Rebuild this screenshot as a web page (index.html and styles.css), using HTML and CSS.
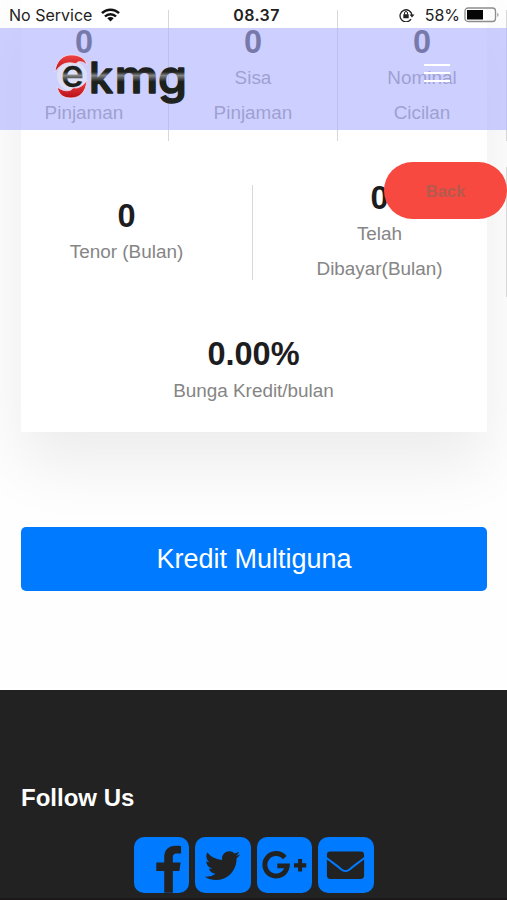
FILE: index.html
```html
<!DOCTYPE html>
<html lang="id">
<head>
<meta charset="utf-8">
<meta name="viewport" content="width=device-width, initial-scale=1">
<title>eKMG</title>
<link rel="stylesheet" href="styles.css">
</head>
<body>
<div class="screen">
  <main class="content">
    <section class="card">
      <div class="row row-top">
        <div class="stat"><strong>0</strong><span><br>Pinjaman</span></div>
        <div class="stat"><strong>0</strong><span>Sisa<br>Pinjaman</span></div>
        <div class="stat"><strong>0</strong><span>Nominal<br>Cicilan</span></div>
      </div>
      <div class="row row-mid">
        <div class="stat short"><strong>0</strong><span>Tenor (Bulan)</span></div>
        <div class="stat"><strong>0</strong><span>Telah<br>Dibayar(Bulan)</span></div>
      </div>
      <div class="row row-last">
        <div class="stat"><strong>0.00%</strong><span>Bunga Kredit/bulan</span></div>
      </div>
    </section>
    <a class="cta">Kredit Multiguna</a>
  </main>

  <footer class="footer">
    <h4>Follow Us</h4>
    <div class="social">
      <a class="tile"><svg viewBox="0 0 56 56"><path d="M30.500 56V34H22.500v-8.500h8V20c0-7.500 4.500-11.500 11.300-11.500 2.500 0 4.500.2 5.700.4v7.600h-4c-3.600 0-4.300 1.700-4.300 4.200v4.800H47L45.800 34h-6.600v22z"/></svg></a>
      <a class="tile"><svg viewBox="0 0 56 56"><g transform="translate(7.500 8.300) scale(.0226)"><path d="M1684 408q-67 98-162 167 1 14 1 42 0 130-38 259.500t-115.500 248.500-184.500 210.500-258 146-323 54.500q-271 0-496-145 35 4 78 4 225 0 401-138-105-2-188-64.500t-114-159.500q33 5 61 5 43 0 85-11-112-23-185.500-111.500t-73.500-205.500v-4q68 38 146 41-66-44-105-115t-39-154q0-88 44-163 121 149 294.500 238.500t371.500 99.500q-8-38-8-74 0-134 94.500-228.500t228.500-94.500q140 0 236 102 109-21 205-78-37 115-142 178 93-10 186-50z"/></g></svg></a>
      <a class="tile"><svg viewBox="0 0 56 56"><path class="line" d="M28 20.600a11.300 11.300 0 1 0 2.500 8.300H20.500"/><path d="M41.500 22h4v4.200h4.200v4.200h-4.200v4.200h-4v-4.200h-4.200v-4.200h4.200z"/></svg></a>
      <a class="tile"><svg viewBox="0 0 56 56"><rect x="9" y="14.500" width="37.500" height="27.500" rx="3.500"/><path class="flap" d="M8 20.500C15 26 19 28.500 23 32c3.500 3 6 3 9.500 0 4-3.500 8-6 15-11.500"/></svg></a>
    </div>
  </footer>

  <a class="back">Back</a>

  <nav class="navbar">
    <svg class="logo" viewBox="0 0 136 60" role="img" aria-label="ekmg">
      <defs>
        <linearGradient id="steel" gradientUnits="userSpaceOnUse" x1="0" y1="8" x2="0" y2="52">
          <stop offset="0" stop-color="#171717"/><stop offset=".34" stop-color="#20231f"/>
          <stop offset=".42" stop-color="#808283"/><stop offset=".48" stop-color="#555756"/>
          <stop offset=".56" stop-color="#1c201b"/><stop offset="1" stop-color="#20231f"/>
        </linearGradient>
        <linearGradient id="red" x1="0" y1="0" x2="0" y2="1">
          <stop offset="0" stop-color="#ee4545"/><stop offset="1" stop-color="#b90e18"/>
        </linearGradient>
      </defs>
      <circle class="disc" cx="20" cy="27" r="15"/>
      <path class="claw" d="M3 23C4 11 12 5 21 6c7 .4 12 3.500 14 10-3-3-6-4-9-3-1 1-2 1.500-3 1.500-8-2-14 0-20 8.500z"/>
      <path class="claw" d="M5 38c6 4 10 4.500 14 3 1-2 3-2.500 5-2 4-.5 8-3 11-8-1 12-7 18-16 18S7 45 5 38z"/>
      <text class="word e" x="9" y="37.500" font-size="38" textLength="23" lengthAdjust="spacingAndGlyphs">e</text>
      <text class="word" x="37" y="43.500" font-size="43" textLength="24" lengthAdjust="spacingAndGlyphs">k</text>
      <text class="word" x="62.500" y="43.500" font-size="46" textLength="44" lengthAdjust="spacingAndGlyphs">m</text>
      <text class="word" x="106" y="43.500" font-size="46" textLength="29" lengthAdjust="spacingAndGlyphs">g</text>
    </svg>
    <div class="burger"><i></i><i></i><i></i></div>
  </nav>

  <header class="status">
    <div class="carrier"><span>No Service</span>
      <svg width="19" height="14" viewBox="0 0 19 14"><g fill="none" stroke="#111" stroke-width="2.500"><path d="M1 5.200a12 12 0 0 1 17 0M4 8.500a7.700 7.700 0 0 1 11 0"/></g><path d="M9.500 13.500 6.300 10.300a4.600 4.600 0 0 1 6.400 0z" fill="#111"/></svg>
    </div>
    <b>08.37</b>
    <div class="power">
      <svg width="16" height="14" viewBox="0 0 16 14"><path d="M12 11.200A6 6 0 1 1 13 7" fill="none" stroke="#222" stroke-width="1.300"/><path d="M10.500 6.500h5L13 9.500zM4.300 6.300h5.400v4H4.300z" fill="#222"/><path d="M5.500 6.500V5a1.500 1.500 0 0 1 3 0v1.500" fill="none" stroke="#222"/></svg>
      <span>58%</span>
      <svg width="36" height="16" viewBox="0 0 36 16"><rect x="1" y="1" width="30.500" height="13.500" rx="3" fill="none" stroke="#8d8d8d" stroke-width="1.300"/><rect x="3" y="3" width="16" height="9.500" fill="#050505"/><path d="M33.300 5.500q2.400 2.300 0 4.600z" fill="#8d8d8d"/></svg>
    </div>
  </header>
</div>
</body>
</html>
```
FILE: styles.css
```css
* { box-sizing: border-box; }
body { margin: 0; background: #fff; font-family: "Liberation Sans", Arial, sans-serif; }
.screen { position: relative; width: 507px; height: 900px; overflow: hidden; display: flex; flex-direction: column; }

.content { height: 690px; flex: none; padding: 0 20px 0 21px; background: #fefefe; }
.card { height: 432px; padding-top: 10px; background: #fff; box-shadow: 0 32px 60px rgba(0, 0, 0, .075); }
.row { display: flex; margin: 0 -20px 0 -21px; }
.stat { position: relative; flex: 1; display: flex; flex-direction: column; align-items: center; justify-content: center; text-align: center; }
.stat strong { font-size: 32.500px; line-height: 40px; color: #1d1d1f; }
.stat span { margin-top: -2px; font-size: 18.900px; line-height: 35px; color: #858585; }
.row-top { height: 131px; }
.row-top .stat { border-right: 1px solid #d8d8d8; }
.row-mid { height: 130px; margin-top: 26px; }
.row-mid .stat + .stat { border-right: 1px solid #d8d8d8; }
.short::after { content: ""; position: absolute; right: 0; top: 18px; height: 95px; border-right: 1px solid #d8d8d8; }
.row-last { margin-top: 37px; }
.row-last span { margin-top: -1px; }

.cta { display: flex; align-items: center; justify-content: center; height: 64px; margin-top: 95px; border-radius: 5px; background: #007bff; color: #fff; font-size: 27px; }

.footer { flex: 1; background: #222; padding: 93px 21px 0; border-bottom: 2px solid #1b171b; }
.footer h4 { margin: 0; font-size: 24px; line-height: 30px; color: #fff; }
.social { display: flex; justify-content: center; gap: 6px; margin-top: 24px; }
.tile { width: 55.500px; height: 56px; border-radius: 10px; background: #007bff; overflow: hidden; }
.tile svg { display: block; width: 100%; height: 100%; fill: #222; }
.tile .line { fill: none; stroke: #222; stroke-width: 5; }
.tile .flap { fill: none; stroke: #007bff; stroke-width: 2; }

.back { position: absolute; right: 0; top: 162px; width: 123px; height: 57px; border-radius: 29px; background: #f7493f; color: #b55a4e; font-size: 16.500px; font-weight: bold; line-height: 59px; text-align: center; }

.navbar { position: absolute; left: 0; top: 28px; width: 100%; height: 102px; display: flex; align-items: flex-start; justify-content: space-between; padding: 21px 57px 0 52px; background: rgba(174, 177, 255, .62); }
.logo { width: 136px; height: 60px; overflow: visible; }
.disc { fill: #dcdff6; }
.claw { fill: url(#red); stroke: #f4e2ec; stroke-width: .8; }
.word { font-family: Inter, sans-serif; font-weight: 500; fill: url(#steel); stroke: url(#steel); stroke-width: 1.500; stroke-linejoin: round; }
.e { stroke-width: .3; }
.burger { display: flex; flex-direction: column; gap: 6px; margin-top: 15px; width: 26px; }
.burger i { height: 2px; background: #fff; }

.status { position: absolute; left: 0; top: 0; width: 100%; height: 29px; display: grid; grid-template-columns: 1fr auto 1fr; align-items: center; padding: 0 7px 0 9px; font-family: Inter, sans-serif; font-size: 16px; color: #222; }
.status b { position: relative; left: 2px; font-weight: 600; letter-spacing: .4px; }
.carrier, .power { display: flex; align-items: center; gap: 9px; }
.power { justify-content: flex-end; gap: 4px; }
.power svg:first-child { margin-right: 6px; }
```
